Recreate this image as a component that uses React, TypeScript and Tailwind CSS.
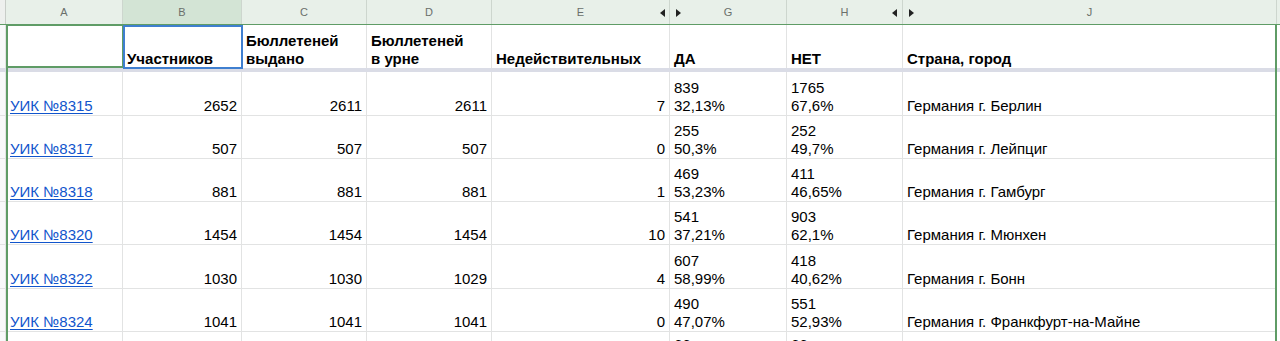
import React from "react";

const COLS = "grid-cols-[6px_117px_119px_125px_125px_178px_117px_116px_374px_3px]";

type Row = {
  uik: string;
  b: string;
  c: string;
  d: string;
  e: string;
  g: [string, string];
  h: [string, string];
  j: string;
};

const rows: Row[] = [
  { uik: "УИК №8315", b: "2652", c: "2611", d: "2611", e: "7", g: ["839", "32,13%"], h: ["1765", "67,6%"], j: "Германия г. Берлин" },
  { uik: "УИК №8317", b: "507", c: "507", d: "507", e: "0", g: ["255", "50,3%"], h: ["252", "49,7%"], j: "Германия г. Лейпциг" },
  { uik: "УИК №8318", b: "881", c: "881", d: "881", e: "1", g: ["469", "53,23%"], h: ["411", "46,65%"], j: "Германия г. Гамбург" },
  { uik: "УИК №8320", b: "1454", c: "1454", d: "1454", e: "10", g: ["541", "37,21%"], h: ["903", "62,1%"], j: "Германия г. Мюнхен" },
  { uik: "УИК №8322", b: "1030", c: "1030", d: "1029", e: "4", g: ["607", "58,99%"], h: ["418", "40,62%"], j: "Германия г. Бонн" },
  { uik: "УИК №8324", b: "1041", c: "1041", d: "1041", e: "0", g: ["490", "47,07%"], h: ["551", "52,93%"], j: "Германия г. Франкфурт-на-Майне" },
];

const heights = ["h-[44px]", "h-[43px]", "h-[43px]", "h-[43px]", "h-[44px]", "h-[43px]"];

function LeftArrow() {
  return (
    <svg width="5" height="8" viewBox="0 0 5 8" className="block">
      <path d="M5 0 L0 4 L5 8 Z" fill="#222" />
    </svg>
  );
}
function RightArrow() {
  return (
    <svg width="5" height="8" viewBox="0 0 5 8" className="block">
      <path d="M0 0 L5 4 L0 8 Z" fill="#222" />
    </svg>
  );
}

const cell = "border-r border-b border-[#e2e3e3] flex items-end overflow-hidden whitespace-nowrap";

export default function App() {
  return (
    <div
      className="relative w-[1280px] h-[341px] overflow-hidden bg-white text-black"
      style={{ fontFamily: '"Liberation Sans", Arial, sans-serif' }}
    >
      {/* column letters */}
      <div className={`grid ${COLS} h-[25px] bg-[#e8f0e9] border-b border-[#5f9c66] text-[11px] text-[#6a6f6b]`}>
        <div className="bg-[#eef0ee] border-r border-[#c8cdc8]" />
        <div className="border-r border-[#cdd6ce] flex items-center justify-center">A</div>
        <div className="bg-[#d3e4d5] border-r border-[#cdd6ce] flex items-center justify-center">B</div>
        <div className="border-r border-[#cdd6ce] flex items-center justify-center">C</div>
        <div className="border-r border-[#cdd6ce] flex items-center justify-center">D</div>
        <div className="relative border-r border-[#cdd6ce] flex items-center justify-center">
          E
          <span className="absolute right-[4px] top-[9px]"><LeftArrow /></span>
        </div>
        <div className="relative border-r border-[#cdd6ce] flex items-center justify-center">
          G
          <span className="absolute left-[6px] top-[9px]"><RightArrow /></span>
        </div>
        <div className="relative border-r border-[#cdd6ce] flex items-center justify-center">
          H
          <span className="absolute right-[5px] top-[9px]"><LeftArrow /></span>
        </div>
        <div className="relative border-r border-[#cdd6ce] flex items-center justify-center">
          J
          <span className="absolute left-[6px] top-[9px]"><RightArrow /></span>
        </div>
        <div />
      </div>

      {/* header row */}
      <div className={`grid ${COLS} h-[43px] text-[15px] font-bold leading-[18px]`}>
        <div className="bg-[#f8f9fa] border-r border-[#e2e3e3]" />
        <div className={`${cell} border-b-0`} />
        <div className={`${cell} border-b-0 px-[4px]`}>Участников</div>
        <div className={`${cell} border-b-0 px-[4px]`}>
          <div>Бюллетеней<br />выдано</div>
        </div>
        <div className={`${cell} border-b-0 px-[4px]`}>
          <div>Бюллетеней<br />в урне</div>
        </div>
        <div className={`${cell} border-b-0 px-[4px]`}>Недействительных</div>
        <div className={`${cell} border-b-0 px-[4px]`}>ДА</div>
        <div className={`${cell} border-b-0 px-[4px]`}>НЕТ</div>
        <div className={`${cell} border-b-0 px-[4px]`}>Страна, город</div>
        <div />
      </div>

      {/* freeze bar */}
      <div className="h-[4px] bg-[#dadce6]" />

      {/* data rows */}
      {rows.map((r, i) => (
        <div key={r.uik} className={`grid ${COLS} ${heights[i]} text-[15px] leading-[18px]`}>
          <div className="bg-[#f8f9fa] border-r border-b border-[#e2e3e3]" />
          <div className={`${cell} px-[4px]`}>
            <span className="text-[#1155cc] underline decoration-1 underline-offset-[2px]">{r.uik}</span>
          </div>
          <div className={`${cell} justify-end px-[4px]`}>{r.b}</div>
          <div className={`${cell} justify-end px-[4px]`}>{r.c}</div>
          <div className={`${cell} justify-end px-[4px]`}>{r.d}</div>
          <div className={`${cell} justify-end px-[4px]`}>{r.e}</div>
          <div className={`${cell} px-[4px]`}>
            <div>{r.g[0]}<br />{r.g[1]}</div>
          </div>
          <div className={`${cell} px-[4px]`}>
            <div>{r.h[0]}<br />{r.h[1]}</div>
          </div>
          <div className={`${cell} px-[4px]`}>{r.j}</div>
          <div />
        </div>
      ))}

      {/* partial next row */}
      <div className={`grid ${COLS} h-[43px] text-[15px] leading-[18px]`}>
        <div className="bg-[#f8f9fa] border-r border-[#e2e3e3]" />
        <div className="border-r border-[#e2e3e3]" />
        <div className="border-r border-[#e2e3e3]" />
        <div className="border-r border-[#e2e3e3]" />
        <div className="border-r border-[#e2e3e3]" />
        <div className="border-r border-[#e2e3e3]" />
        <div className="border-r border-[#e2e3e3] px-[4px] pt-[4px]">66</div>
        <div className="border-r border-[#e2e3e3] px-[4px] pt-[4px]">66</div>
        <div className="border-r border-[#e2e3e3]" />
        <div />
      </div>

      {/* green range border */}
      <div className="pointer-events-none absolute left-[6px] top-[24px] w-[1271px] h-[320px] border-l-2 border-r-2 border-t border-[#5f9c66]" />
      {/* A1 green box */}
      <div className="pointer-events-none absolute left-[6px] top-[24px] w-[118px] h-[44px] border-2 border-[#5f9c66]" />
      {/* selected B1 */}
      <div className="pointer-events-none absolute left-[123px] top-[25px] w-[120px] h-[44px] border-2 border-[#3f7fd0]" />
    </div>
  );
}
